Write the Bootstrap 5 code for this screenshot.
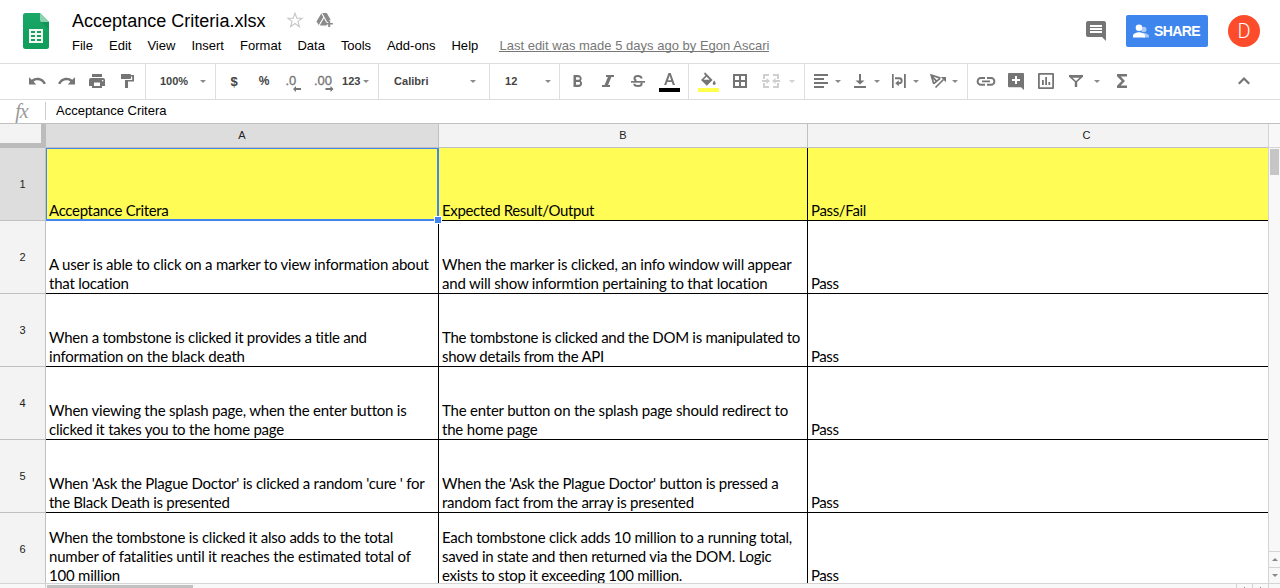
<!DOCTYPE html>
<html lang="en">
<head>
<meta charset="utf-8">
<title>Acceptance Criteria.xlsx</title>
<link href="https://cdn.jsdelivr.net/npm/bootstrap@5.3.0/dist/css/bootstrap.min.css" rel="stylesheet">
<style>
body{font-family:"Liberation Sans",Arial,sans-serif;color:#000;font-size:13px;line-height:16px;width:1280px;height:588px}
svg{display:block;flex:none}
[data-w]{white-space:nowrap;display:inline-block}
.topbar{height:64px;border-bottom:1px solid #dedede}
.sheet-logo{margin:13px 0 0 23px;width:26px;height:36px}
.titles{margin-left:23px;padding-top:9px}
.doc-title{font-size:18px;line-height:24px;height:24px}
.menus{gap:16px;margin-top:5px;height:18px}
.menus>*{text-decoration:none;color:#000}
.menus .last-edit{color:#777;border-bottom:1px solid #777;margin-left:5px;height:14px}
.star{margin:2px 0 0 20px}
.drive{margin:3px 0 0 12px}
.share{width:82px;height:32px;background:#3e86ee;border-radius:2px;font-size:14px;font-weight:700;line-height:32px;padding:0 0 0 6px;border:0;gap:4px}
.avatar{width:32px;height:32px;background:#fc4c2b;font:300 20px/32px Roboto,sans-serif;margin-left:20px}
.toolbar{height:36px;border-bottom:1px solid #dedede;color:#757575;fill:#757575}
.group{height:35px;border-right:1px solid #dedede;padding-top:7px;flex:none}
.group:last-child{border:0}
.tool{width:30px;height:20px;display:flex;justify-content:center;flex:none}
.tool svg{width:22px;height:22px;overflow:visible}
.lbl{font-size:11px;font-weight:700;color:#444;line-height:21px;height:20px}
.dollar{font-size:13px}
.caret{width:0;height:0;border:3px solid transparent;border-top-color:#8a8a8a;border-bottom:0;margin-top:9px;flex:none}
.caret.off{border-top-color:#d0d0d0}
.fbar{height:24px;border-bottom:1px solid #c0c0c0}
.fx{width:45px;font:italic 20px/22px "Liberation Serif",serif;color:#999;text-align:center;letter-spacing:-1px;padding-right:2px}
.fbar-text{border-left:1px solid #ccc;height:18px;margin-top:2px;padding-left:10px;line-height:17px}
.board{height:464px}
.grid-area{width:1268px;height:459px}
.cols{display:grid;grid-template-columns:46px 393px 369px 460px}
.head{height:24px;font-size:11px;background:#f3f3f3;color:#222}
.head>div{border-right:1px solid #c0c0c0;border-bottom:1px solid #c0c0c0;text-align:center;line-height:23px}
.head>div:last-child{border-right:0;padding-left:97px}
.head>.corner{border-right:5px solid #bcbcbc;border-bottom:5px solid #bcbcbc}
.on{background:#ddd}
.line-row{height:73px}
.line-row>div{border-right:1px solid #000;border-bottom:1px solid #000;padding-left:3px;font-family:Lato,Carlito,sans-serif;font-size:15px;line-height:19px}
.line-row>div:last-child{border-right:0}
.line-row>.num{font:11px/72px "Liberation Sans",sans-serif;background:#f3f3f3;border-color:#c0c0c0;color:#222;text-align:center;padding:0}
.line-row>.num.on{background:#ddd}
.hl{background:#fffd55}
.pick{left:46px;top:24px;width:393px;height:73px;border:1px solid #4285f0;border-right-width:2px;border-bottom-width:2px}
.knob{right:-5px;bottom:-5px;width:8px;height:8px;background:#4285f0;border:1px solid #fff}
.vbar{width:12px;border-left:1px solid #d4d4d4;background:#f8f8f8;height:459px}
.vtop{height:24px;border-bottom:1px solid #d4d4d4}
.vthumb{width:9px;height:26px;background:#c5c5c5;margin:1px}
.step{height:16px;border-top:1px solid #d4d4d4;padding:6px 0 0 3px}
.hbar{height:5px;background:#f8f8f8;border-top:1px solid #d4d4d4}
.hthumb{width:146px;height:3px;background:#c1c1c1;margin:1px 0 0 1px}
.hleft{width:46px;border-right:1px solid #d4d4d4}
.hstep{width:16px;border-left:1px solid #d4d4d4}
.hstep.end{width:12px}
.hstep i{display:block;width:1px;height:1px;background:#888;margin:3px auto 0}
</style>
</head>
<body class="overflow-hidden bg-white">
<header class="topbar d-flex">
  <svg class="sheet-logo" viewBox="0 0 26 36"><defs><linearGradient id="g" x2="0" y2="1"><stop stop-color="#1aa767"/><stop offset="1" stop-color="#109d5b"/></linearGradient></defs><path fill="url(#g)" d="M2.500 0H17l9 9v24.500a2.500 2.500 0 0 1-2.500 2.500h-21A2.500 2.500 0 0 1 0 33.500v-31A2.500 2.500 0 0 1 2.500 0z"/><path fill="#0b8c50" opacity=".6" d="M18 9h8v8z"/><path fill="#8ed1b1" d="M17 0l9 9h-7a2 2 0 0 1-2-2z"/><path fill="#f3f8f3" fill-rule="evenodd" d="M6 16h14v14H6zM8 18h4v2H8zM14 18h4v2h-4zM8 22h4v2H8zM14 22h4v2h-4zM8 26h4v2H8zM14 26h4v2h-4z"/></svg>
  <div class="titles">
    <div class="doc-title d-flex"><span data-w="193.500">Acceptance Criteria.xlsx</span>
      <svg class="star" width="18" height="18" viewBox="0 0 18 18"><path fill="none" stroke="#c6c6c6" stroke-width="1.100" d="M9 2.200l1.800 5h5.300l-4.200 3.200 1.500 5.200L9 12.500l-4.400 3.100 1.500-5.200-4.200-3.200h5.300z"/></svg>
      <svg class="drive" width="18" height="16" viewBox="0 0 18 16"><path fill="#8a8a8a" d="M5.600 1h5.200l3.900 7H13v2H10.600v3.600H3L.5 9.600z"/><path fill="none" stroke="#fff" stroke-width="1.100" d="M5.600 1l5 9M3 13.600L8.200 4.800"/><path fill="#8a8a8a" d="M12.200 8.500h2v2.400h2.700v1.700h-2.700v2.400h-2v-2.400H9.600v-1.700h2.600z"/></svg>
    </div>
    <nav class="menus d-flex">
      <a data-w="21">File</a><a data-w="22.400">Edit</a><a data-w="28">View</a><a data-w="32.500">Insert</a><a data-w="41.500">Format</a><a data-w="27.500">Data</a><a data-w="30">Tools</a><a data-w="48.500">Add-ons</a><a data-w="27">Help</a><a class="last-edit" data-w="270">Last edit was made 5 days ago by Egon Ascari</a>
    </nav>
  </div>
  <div class="d-flex ms-auto" style="padding:15px 20px 0 0">
    <svg width="20" height="20" viewBox="0 0 20 20" style="margin:6px 20px 0 0"><path fill="#757575" fill-rule="evenodd" d="M2 0h16a2 2 0 0 1 2 2v18l-4-4H2a2 2 0 0 1-2-2V2a2 2 0 0 1 2-2zM4 4v2h12V4zM4 7v2h12V7zM4 10v2h12v-2z"/></svg>
    <button class="share btn text-white d-flex align-items-center"><svg width="18" height="16" viewBox="0 0 18 16"><circle cx="11.800" cy="6.500" r="2.700" fill="#a9c9f7"/><path fill="#a9c9f7" d="M11 10c3 0 6 1.300 6 3.200V14.500h-6z"/><circle cx="7" cy="4.800" r="3.300" fill="#fff"/><path fill="#fff" d="M1 14.500v-1.800C1 10.500 5 9.300 7 9.300s6 1.200 6 3.400v1.800z"/></svg><span data-w="46">SHARE</span></button>
    <div class="avatar rounded-circle text-white text-center">D</div>
  </div>
</header>

<div class="toolbar d-flex">
  <div class="group d-flex" style="width:146px;padding-left:22px">
    <span class="tool"><svg viewBox="0 0 22 22"><path d="M11.500 6.700c-2.400 0-4.200.7-5.700 2L3 6.200v7.300h7.300L7.600 10.700c1.100-.9 2.400-1.400 3.900-1.400 2.700 0 5 1.500 6.100 4l2.300-.8c-1.300-3.500-4.600-5.800-8.400-5.800z"/></svg></span>
    <span class="tool"><svg viewBox="0 0 22 22"><path transform="matrix(-1 0 0 1 22 0)" d="M11.500 6.700c-2.400 0-4.200.7-5.700 2L3 6.200v7.300h7.300L7.600 10.700c1.100-.9 2.400-1.400 3.900-1.400 2.700 0 5 1.500 6.100 4l2.300-.8c-1.300-3.500-4.600-5.800-8.400-5.800z"/></svg></span>
    <span class="tool"><svg viewBox="0 0 22 22"><path fill-rule="evenodd" d="M6 3h10v3H6zM5 7h12a2 2 0 0 1 2 2v6h-3v2H6v-2H3V9a2 2 0 0 1 2-2zM8 11.500V15h6v-3.500zM16 9v1.300h1.300V9z"/></svg></span>
    <span class="tool"><svg viewBox="0 0 22 22"><path d="M5 3h9a1 1 0 0 1 1 1h3v6.500h-6V17h-3V9h7.200V5.500H15V7a1 1 0 0 1-1 1H5z"/></svg></span>
  </div>
  <div class="group d-flex" style="width:70px;padding-left:14px"><span class="lbl" data-w="28">100%</span><i class="caret" style="margin-left:12px"></i></div>
  <div class="group d-flex" style="width:163px;padding-left:3px">
    <span class="tool lbl dollar">$</span><span class="tool lbl dollar" style="font-size:12px">%</span>
    <span class="tool"><svg viewBox="0 0 22 22"><text x="2.500" y="14" font-size="13" stroke="#757575" stroke-width=".3">.0</text><path d="M10 18l3-3v2h5v2h-5v2z"/></svg></span>
    <span class="tool"><svg viewBox="0 0 22 22"><text x="1" y="14" font-size="13" stroke="#757575" stroke-width=".3">.00</text><path d="M20.500 18l-3-3v2h-5v2h5v2z"/></svg></span>
    <span class="lbl" style="margin-left:3px" data-w="18.500">123</span><i class="caret" style="margin-left:2px"></i>
  </div>
  <div class="group d-flex" style="width:111px;padding-left:15px"><span class="lbl" data-w="34.500">Calibri</span><i class="caret" style="margin-left:41px"></i></div>
  <div class="group d-flex" style="width:70px;padding-left:15px"><span class="lbl" data-w="12.500">12</span><i class="caret" style="margin-left:27px"></i></div>
  <div class="group d-flex" style="width:129px;padding-left:2px">
    <span class="tool"><svg viewBox="0 0 22 22"><path fill-rule="evenodd" d="M7.500 4h5a3.500 3.500 0 0 1 2.300 5.800A3.500 3.500 0 0 1 13 16H7.500zM10 6.200v2.600h2.500a1.300 1.300 0 0 0 0-2.600zM10 11v2.700h2.800a1.300 1.300 0 0 0 0-2.700z"/></svg></span>
    <span class="tool"><svg viewBox="0 0 22 22"><path d="M10 4h8v2h-2.600l-3.300 8H14v2H6v-2h2.600l3.300-8H10z"/></svg></span>
    <span class="tool"><svg viewBox="0 0 22 22"><path d="M5 10h14v1.700H5z"/><path fill="none" stroke="#757575" stroke-width="2" d="M15.500 7.500C15.500 5.700 14 5 12 5S8.500 5.900 8.500 7.400c0 1.300 1 1.900 2 2.100M8.300 12.800c0 1.500 1.500 2.300 3.700 2.300s3.600-.8 3.600-2.300c0-.5-.2-.9-.5-1.200"/></svg></span>
    <span class="tool" style="margin-left:3px"><svg viewBox="0 0 22 22"><path fill-rule="evenodd" d="M9.500 2h2.200L16 14h-2.200l-1-3H8.300l-1 3H5.100zM10.600 4.600L9 9.200h3.200z"/><path fill="#000" d="M0 17h21v4H0z"/></svg></span>
  </div>
  <div class="group d-flex" style="width:116px;padding-left:5px">
    <span class="tool"><svg viewBox="0 0 22 22"><path fill-rule="evenodd" d="M7 1.200L14.600 9l-5.800 5.700L3 9l4.500-4.500L6 3zM8.600 5.700L5.500 8.800h6.200z"/><path d="M16.200 9.500c2 2.400 2 4 0 4.500-2-.5-2-2.100 0-4.500z"/><path fill="#ffff4d" d="M0 17h21v4H0z"/></svg></span>
    <span class="tool ms-1"><svg viewBox="0 0 22 22" style="margin-left:-6px"><path fill-rule="evenodd" d="M4 3h14v14H4zM6 5v4h4V5zM12 5v4h4V5zM6 11v4h4v-4zM12 11v4h4v-4z"/></svg></span>
    <span class="tool" style="margin-left:-2px"><svg viewBox="0 0 22 22"><path fill="none" stroke="#cfcfcf" stroke-width="2" d="M9 4H4v4M13 4h5v4M9 16H4v-4M13 16h5v-4M2 10h6M20 10h-6"/><path fill="#cfcfcf" d="M6.500 7l3.500 3-3.500 3zM15.500 7L12 10l3.500 3z"/></svg></span>
    <i class="caret off" style="margin-left:3px"></i>
  </div>
  <div class="group d-flex" style="width:163px;padding-left:1px">
    <span class="tool"><svg viewBox="0 0 22 22"><path d="M4 3h14v2H4zM4 7h10v2H4zM4 11h14v2H4zM4 15h10v2H4z"/></svg></span><i class="caret" style="margin-left:-1px"></i>
    <span class="tool" style="margin-left:4px"><svg viewBox="0 0 22 22"><path d="M10 3h2v6.500h3.500L11 13.500 6.500 9.500H10zM5 15h12v2H5z"/></svg></span><i class="caret" style="margin-left:-1px"></i>
    <span class="tool" style="margin-left:4px"><svg viewBox="0 0 22 22"><path d="M4 3h1.700v14H4zM16 3h1.800v14H16z"/><path fill="none" stroke="#757575" stroke-width="1.900" d="M7 7.300h4.200a2.500 2.500 0 0 1 0 5H10"/><path d="M10.800 9.300v6L7.200 12.300z"/></svg></span><i class="caret" style="margin-left:-1px"></i>
    <span class="tool" style="margin-left:4px"><svg viewBox="0 0 22 22"><path fill="none" stroke="#757575" stroke-width="1.700" d="M6.800 13L4.200 4l9.300 3.100M4.800 5.200l5.400 5.600M6.800 12.600l6.300-5.300M8.500 16.500l8-8"/><path d="M13.800 6H19v5.200z"/></svg></span><i class="caret" style="margin-left:-1px"></i>
  </div>
  <div class="group d-flex flex-grow-1" style="padding-left:3px">
    <span class="tool"><svg viewBox="0 0 22 22"><path fill="none" stroke="#757575" stroke-width="1.900" d="M10 7H6a3.400 3.400 0 0 0 0 6.800h4M12 7h4a3.400 3.400 0 0 1 0 6.800h-4M7 10.400h8"/></svg></span>
    <span class="tool"><svg viewBox="0 0 22 22"><path fill-rule="evenodd" d="M4 2h14a1 1 0 0 1 1 1v16l-3-2.800H4a1 1 0 0 1-1-1V3a1 1 0 0 1 1-1zM10 5v3H7v2h3v3h2v-3h3V8h-3V5z"/></svg></span>
    <span class="tool"><svg viewBox="0 0 22 22"><path fill-rule="evenodd" d="M4 2h14a1 1 0 0 1 1 1v14a1 1 0 0 1-1 1H4a1 1 0 0 1-1-1V3a1 1 0 0 1 1-1zM4.800 3.700v12.600h12.400V3.700zM7 9h1.800v5H7zM10.200 6H12v8h-1.800zM13.400 11h1.800v3h-1.800z"/></svg></span>
    <span class="tool"><svg viewBox="0 0 22 22"><path fill-rule="evenodd" d="M4 4h14v1.800L12.200 11v5H9.800v-5L4 5.800zM7.500 6.700L11 10l3.500-3.300z"/></svg></span>
    <i class="caret" style="margin-left:3px"></i>
    <span class="tool" style="margin-left:7px"><svg viewBox="0 0 22 22"><path d="M6 3h10v2.500h-6.300L14 10l-4.300 4.500H16V17H6v-2.200L10.700 10 6 5.200z"/></svg></span>
    <span class="tool ms-auto" style="margin-right:21px"><svg viewBox="0 0 22 22"><path fill="none" stroke="#757575" stroke-width="2.200" d="M5.800 12.700L11 7.500l5.200 5.200"/></svg></span>
  </div>
</div>

<div class="fbar d-flex"><div class="fx">fx</div><div class="fbar-text"><span data-w="110.500">Acceptance Critera</span></div></div>

<main class="board">
  <div class="d-flex">
    <div class="grid-area position-relative overflow-hidden" id="sheet">
      <div class="cols head"><div class="corner"></div><div class="on">A</div><div>B</div><div>C</div></div>
    </div>
    <div class="vbar d-flex flex-column"><div class="vtop"></div><div class="vthumb"></div>
      <div class="step mt-auto"><svg width="6" height="4"><path fill="#888" d="M0 3l3-3 3 3z"/></svg></div><div class="step"><svg width="6" height="4"><path fill="#888" d="M0 0h6L3 3z"/></svg></div></div>
  </div>
  <div class="hbar d-flex"><div class="hleft"></div><div class="hthumb"></div><div class="hstep ms-auto"><i></i></div><div class="hstep"><i></i></div><div class="hstep end"></div></div>
</main>
<script src="https://cdn.jsdelivr.net/npm/bootstrap@5.3.0/dist/js/bootstrap.bundle.min.js"></script>
<script>
// Each cell is a list of [line, width in px].
const rows = [
  [[["Acceptance Critera",119.500]], [["Expected Result/Output",152]], [["Pass/Fail",55]]],
  [[["A user is able to click on a marker to view information about",380],["that location",80]],
   [["When the marker is clicked, an info window will appear",349.500],["and will show informtion pertaining to that location",326]], [["Pass",27.500]]],
  [[["When a tombstone is clicked it provides a title and",318],["information on the black death",196]],
   [["The tombstone is clicked and the DOM is manipulated to",358],["show details from the API",162]], [["Pass",27.500]]],
  [[["When viewing the splash page, when the enter button is",357],["clicked it takes you to the home page",235]],
   [["The enter button on the splash page should redirect to",345.500],["the home page",95.500]], [["Pass",27.500]]],
  [[["When 'Ask the Plague Doctor' is clicked a random 'cure ' for",375.500],["the Black Death is presented",180.500]],
   [["When the 'Ask the Plague Doctor' button is pressed a",336],["random fact from the array is presented",252]], [["Pass",27.500]]],
  [[["When the tombstone is clicked it also adds to the total",344],["number of fatalities until it reaches the estimated total of",362.500],["100 million",71]],
   [["Each tombstone click adds 10 million to a running total,",350],["saved in state and then returned via the DOM. Logic",329.500],["exists to stop it exceeding 100 million.",240]], [["Pass",27.500]]]
];
const sheet = document.getElementById("sheet");
rows.forEach((cells, i) => {
  const row = document.createElement("div");
  row.className = "cols line-row";
  row.innerHTML = `<div class="num ${i ? "" : "on"}">${i + 1}</div>` + cells.map(lines =>
    `<div class="d-flex flex-column justify-content-end align-items-start ${i ? "" : "hl"}">` +
    lines.map(([t, w]) => `<span data-w="${w}">${t}</span>`).join("") + `</div>`).join("");
  sheet.append(row);
});
sheet.insertAdjacentHTML("beforeend", '<div class="pick position-absolute"><div class="knob position-absolute"></div></div>');
// Track each text run out to its stated width.
document.querySelectorAll("[data-w]").forEach(el => {
  const w = +el.dataset.w, natural = el.getBoundingClientRect().width;
  el.style.letterSpacing = (w - natural) / el.textContent.length + "px";
});
</script>
</body>
</html>
